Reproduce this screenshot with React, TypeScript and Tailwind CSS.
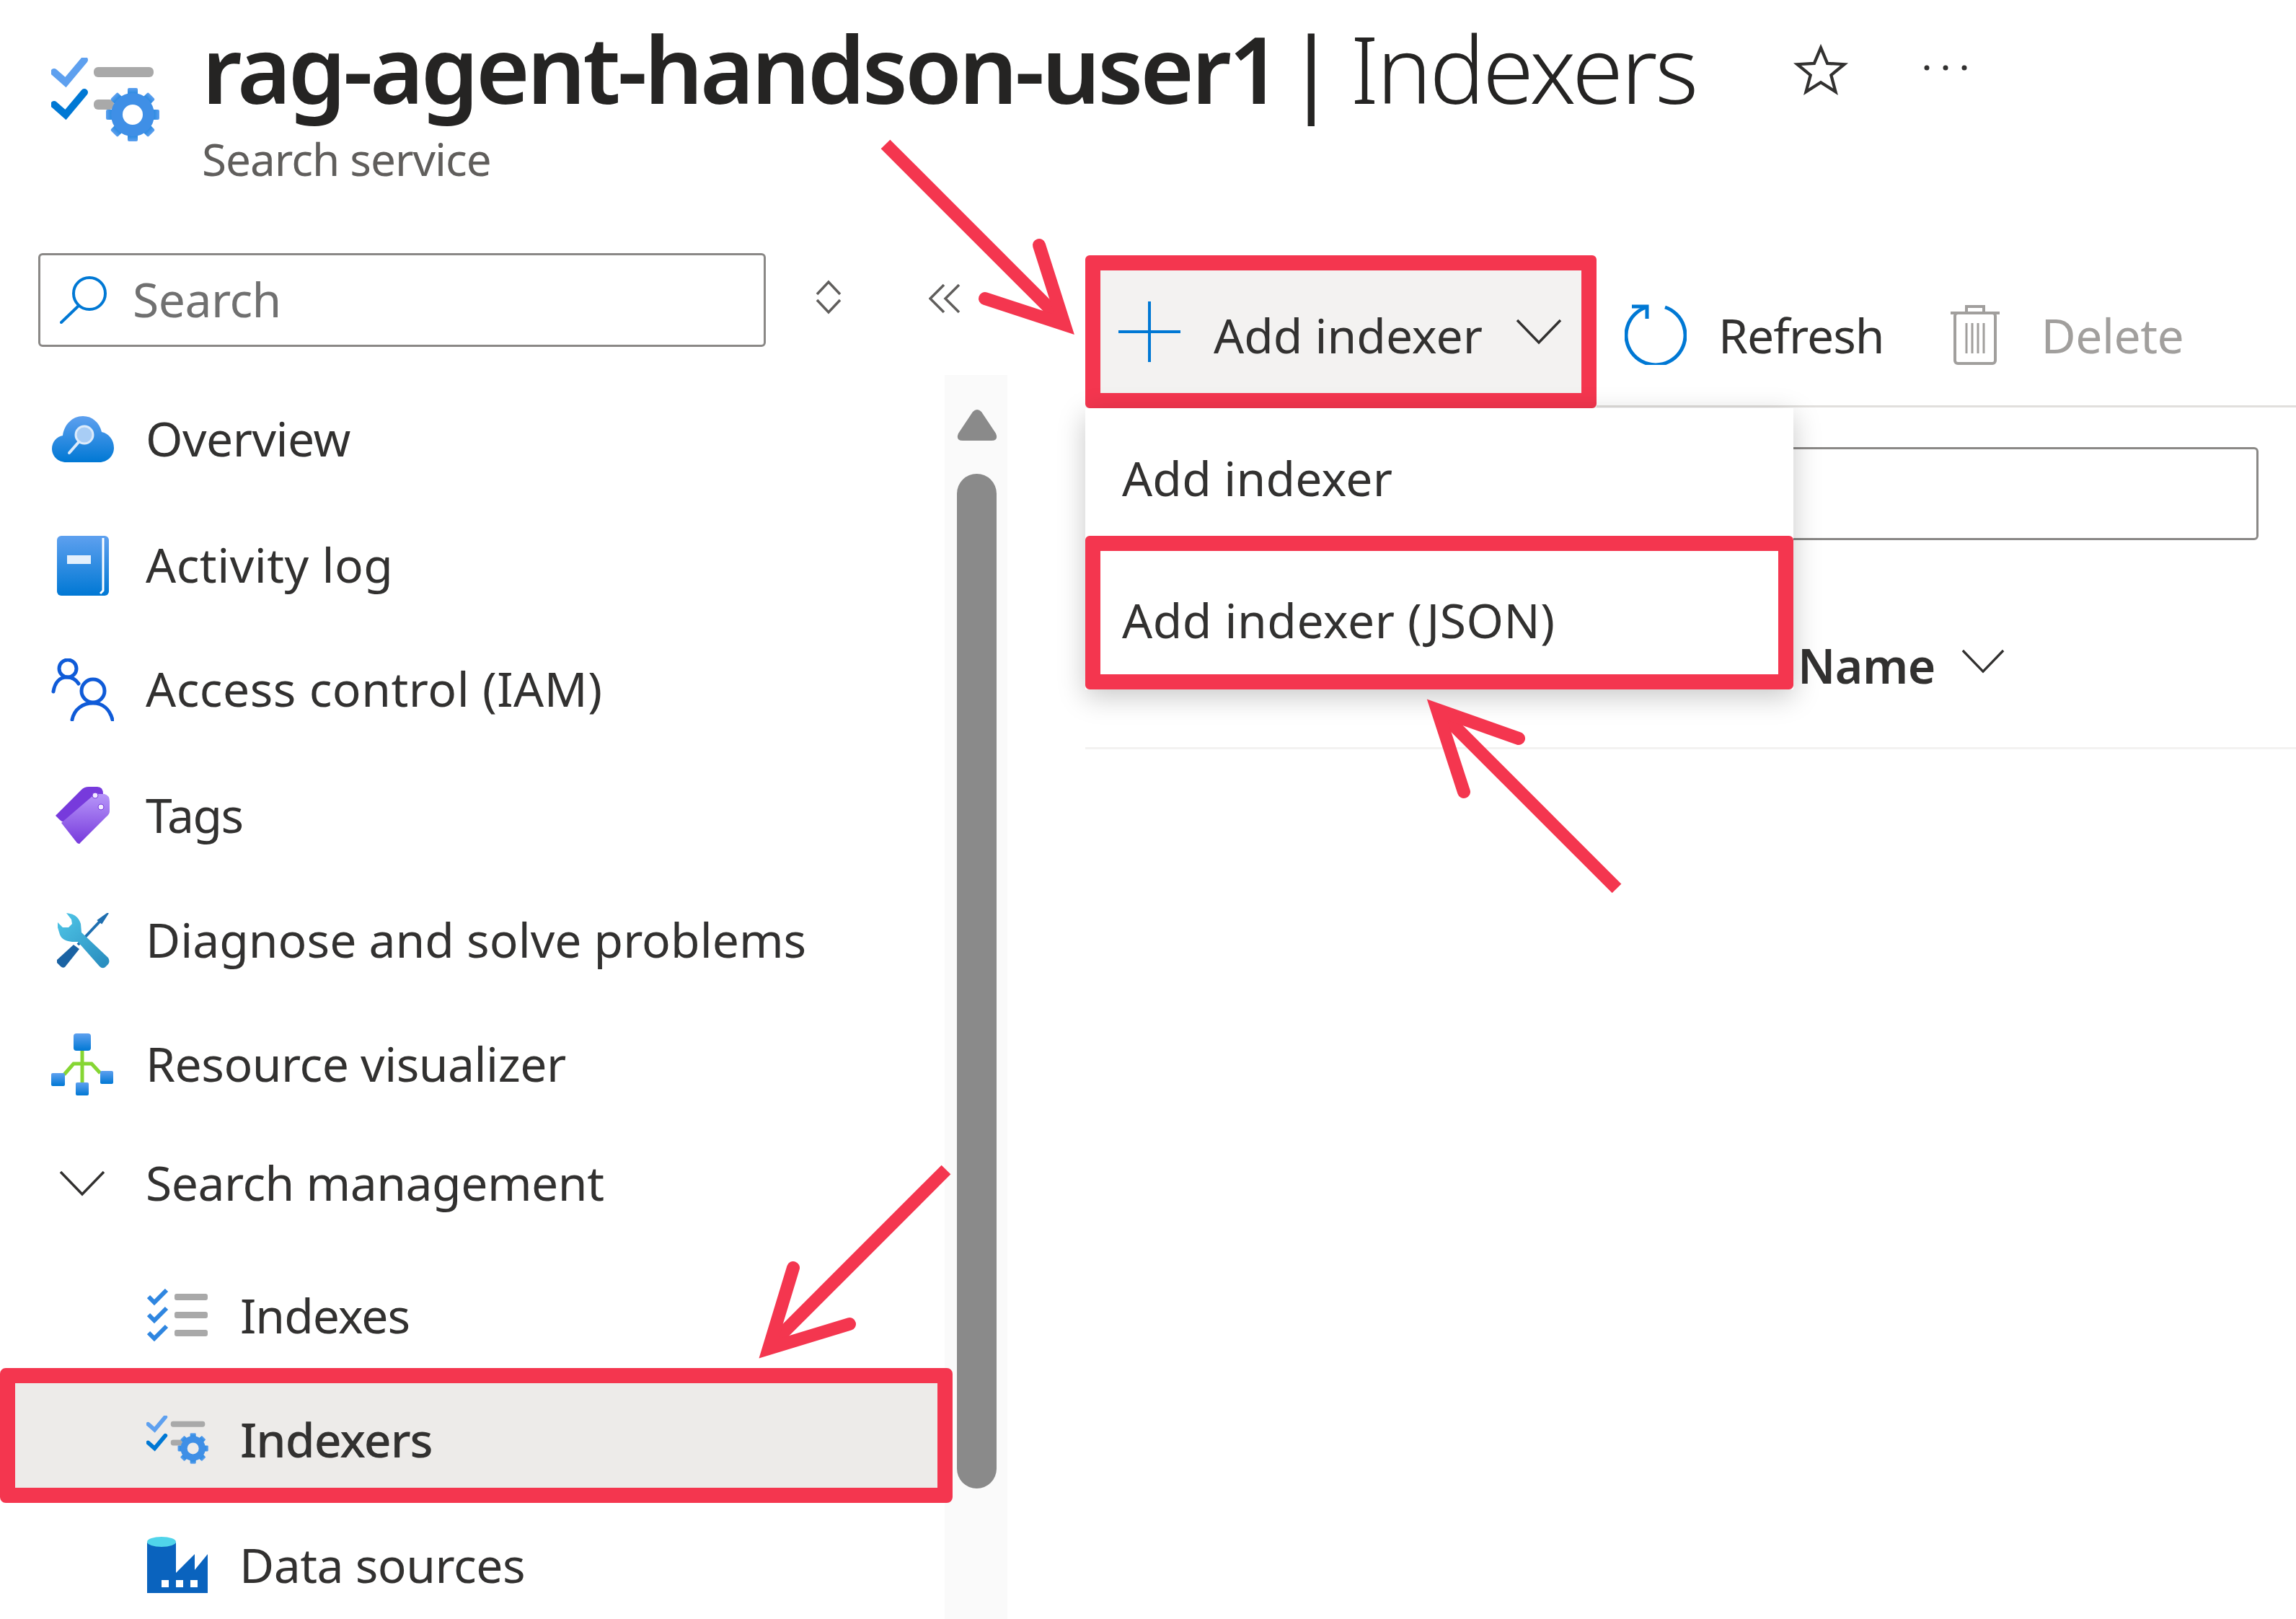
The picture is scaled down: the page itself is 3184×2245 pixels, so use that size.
const gearAngles = [0, 45, 90, 135, 180, 225, 270, 315]

function Defs() {
    return (
        <svg className="absolute w-0 h-0">
            <defs>
                <linearGradient id="blue" x1="0" y1="0" x2="0" y2="1">
                    <stop offset="0" stopColor="#5ea0ef" />
                    <stop offset="1" stopColor="#0078d4" />
                </linearGradient>
                <linearGradient id="purple" x1="0" y1="0" x2="0" y2="1">
                    <stop offset="0" stopColor="#b796f9" />
                    <stop offset="1" stopColor="#773adc" />
                </linearGradient>
                <linearGradient id="cyan" x1="0" y1="0" x2="0.8" y2="1">
                    <stop offset="0" stopColor="#50c7e8" />
                    <stop offset="1" stopColor="#2a8fc0" />
                </linearGradient>
            </defs>
        </svg>
    )
}

function IndexerIcon({ className }: { className: string }) {
    return (
        <svg viewBox="0 0 152 118" className={className}>
            <path d="M4 20 L20 34 L46 3" fill="none" stroke="#5ea0ef" strokeWidth="10" strokeLinecap="round" />
            <path d="M4 65 L20 79 L46 48" fill="none" stroke="#0078d4" strokeWidth="10" strokeLinecap="round" />
            <rect x="59" y="13" width="83" height="14" rx="6" fill="#a9a9a9" />
            <rect x="59" y="58" width="28" height="14" rx="6" fill="#a9a9a9" />
            <g>
                {gearAngles.map((a) => (
                    <rect key={a} x="106" y="42" width="14" height="14" rx="2" fill="url(#blue)" transform={`rotate(${a} 113 79)`} />
                ))}
                <circle cx="113" cy="79" r="22" fill="none" stroke="#3f8fe6" strokeWidth="16" />
            </g>
        </svg>
    )
}

function IndexesIcon() {
    return (
        <svg viewBox="0 0 84 73" className="w-[84px] h-[73px]">
            {[0, 25, 50].map((y) => (
                <g key={y}>
                    <path d={`M2 ${y + 11} L10 ${y + 19} L27 ${y + 2}`} fill="none" stroke="#2f86e0" strokeWidth="6" />
                    <rect x="38" y={y + 7} width="46" height="9" rx="3" fill="#a9a9a9" />
                </g>
            ))}
        </svg>
    )
}

function OverviewIcon() {
    return (
        <svg viewBox="0 0 86 64" className="w-[86px] h-[64px]">
            <path d="M20 64 C8 64 0 55 0 45 C0 36 7 28 15 27 C17 12 28 0 43 0 C56 0 66 9 69 22 C79 24 86 33 86 44 C86 55 77 64 66 64 Z" fill="url(#blue)" />
            <line x1="38" y1="35" x2="24" y2="51" stroke="#dcebfb" strokeWidth="4" strokeLinecap="round" />
            <circle cx="45" cy="26" r="12" fill="#a8cdf5" stroke="#dcebfb" strokeWidth="3" />
        </svg>
    )
}

function ActivityIcon() {
    return (
        <svg viewBox="0 0 72 83" className="w-[72px] h-[83px]">
            <rect x="0" y="0" width="72" height="83" rx="6" fill="url(#blue)" />
            <path d="M64 3 L64 76 L60 80" fill="none" stroke="white" strokeWidth="3" />
            <rect x="14" y="27" width="33" height="12" fill="#e4f0fc" />
        </svg>
    )
}

function AccessIcon() {
    return (
        <svg viewBox="0 0 87 87" className="w-[87px] h-[87px]" fill="none" stroke="#0f5bd8" strokeWidth="5" strokeLinecap="round">
            <circle cx="23" cy="14" r="12" />
            <path d="M3 46 C5 33 12 26 22 26 C29 26 34 29 38 35" />
            <circle cx="58" cy="45" r="16" />
            <path d="M29 85 C32 70 44 62 58 62 C71 62 81 70 85 85" />
        </svg>
    )
}

function TagsIcon() {
    return (
        <svg viewBox="0 0 75 80" className="w-[75px] h-[80px]">
            <path d="M0 40 L36 4 Q40 0 46 0 L58 0 Q66 0 66 10 L66 16 L14 48 Q10 50 6 46 Z" fill="#773adc" />
            <path d="M8 50 L50 14 Q54 10 60 10 L68 10 Q75 12 75 20 L75 34 Q75 38 70 42 L34 78 Q34 80 30 78 Z" fill="url(#purple)" />
            <circle cx="55" cy="12" r="4" fill="#f2ecff" stroke="#773adc" strokeWidth="1" />
            <circle cx="63" cy="28" r="4" fill="#f2ecff" stroke="#773adc" strokeWidth="1" />
        </svg>
    )
}

function DiagnoseIcon() {
    return (
        <svg viewBox="0 0 74 77" className="w-[74px] h-[77px]">
            <path d="M1 65 L24 44 L32 50 L12 75 Q9 77 6 74 L1 69 Z" fill="#1a62a3" />
            <path d="M30 44 L62 10" stroke="#1f6fb0" strokeWidth="4" fill="none" />
            <path d="M58 10 L72 0 L63 14 Z" fill="#1f6fb0" stroke="#1f6fb0" strokeWidth="2" />
            <path d="M14 0 C24 1 31 5 34 15 L35 27 L72 62 Q75 67 72 71 L68 75 Q64 78 60 74 L30 40 L22 40 C14 39 8 37 5 30 L2 20 L2 13 L9 20 L17 20 L22 15 L21 9 Z" fill="url(#cyan)" />
        </svg>
    )
}

function ResourceIcon() {
    return (
        <svg viewBox="0 0 87 86" className="w-[87px] h-[86px]">
            <path d="M43 24 L43 68 M18 57 L31 42 L56 42 L68 55" fill="none" stroke="#86d633" strokeWidth="5" />
            <rect x="31" y="0" width="24" height="24" rx="4" fill="url(#blue)" />
            <rect x="0" y="55" width="19" height="18" rx="2" fill="url(#blue)" />
            <rect x="68" y="52" width="18" height="18" rx="2" fill="url(#blue)" />
            <rect x="34" y="68" width="18" height="18" rx="2" fill="url(#blue)" />
        </svg>
    )
}

function DataSourcesIcon() {
    return (
        <svg viewBox="0 0 84 80" className="w-[84px] h-[80px]">
            <path d="M0 8 L0 78 L84 78 L84 24 L66 46 L66 24 L40 50 L40 8 Z" fill="#0a63be" />
            <ellipse cx="20" cy="7" rx="20" ry="7" fill="#50d4ea" />
            <rect x="20" y="60" width="10" height="10" fill="white" />
            <rect x="40" y="60" width="10" height="10" fill="white" />
            <rect x="60" y="60" width="10" height="10" fill="white" />
        </svg>
    )
}

function Chevron({ className }: { className: string }) {
    return (
        <svg viewBox="0 0 64 36" className={className} fill="none" stroke="#323130" strokeWidth="3.5">
            <path d="M2 2 L32 33 L62 2" />
        </svg>
    )
}

const rows = [
    { label: 'Overview', icon: <OverviewIcon />, cls: 'h-[178px]', text: 'tracking-[-0.5px]' },
    { label: 'Activity log', icon: <ActivityIcon />, cls: 'h-[172px]', text: 'tracking-[0.5px]' },
    { label: 'Access control (IAM)', icon: <AccessIcon />, cls: 'h-[172px]', text: 'tracking-[0.5px]' },
    { label: 'Tags', icon: <TagsIcon />, cls: 'h-[178px]', text: 'tracking-[-1.5px]' },
    { label: 'Diagnose and solve problems', icon: <DiagnoseIcon />, cls: 'h-[168px]', text: 'tracking-[0px]' },
    { label: 'Resource visualizer', icon: <ResourceIcon />, cls: 'h-[176px]', text: 'tracking-[-0.5px]' },
]

export default function App() {
    return (
        <div className="relative w-[3184px] h-[2245px] overflow-hidden bg-white font-['Noto_Sans',sans-serif] text-[#323130]">
            <Defs />

            <header className="flex items-start h-[351px] pl-[71px]">
                <IndexerIcon className="w-[152px] h-[118px] mt-[80px] shrink-0" />
                <div className="ml-[57px]">
                    <h1 className="flex items-baseline text-[128px] leading-[190px] tracking-[-3px] whitespace-nowrap text-[#252423] font-light">
                        <span className="font-semibold tracking-[-4px]">rag-agent-handson-user1</span>
                        <span className="ml-[10px] font-normal">|</span>
                        <span className="ml-[22px]">Indexers</span>
                    </h1>
                    <p className="text-[62px] leading-[70px] text-[#605e5c] tracking-[-1px] -mt-[5px]">Search service</p>
                </div>
                <svg viewBox="0 0 24 24" className="w-[78px] h-[78px] ml-[134px] mt-[58px] shrink-0" fill="none" stroke="#323130" strokeWidth="1.3">
                    <path d="M12 2.5 L14.8 9.2 L22 9.6 L16.4 14.2 L18.3 21.3 L12 17.3 L5.7 21.3 L7.6 14.2 L2 9.6 L9.2 9.2 Z" />
                </svg>
                <svg viewBox="0 0 60 8" className="w-[60px] h-[8px] ml-[104px] mt-[90px] shrink-0" fill="#323130">
                    <circle cx="4" cy="4" r="3.5" />
                    <circle cx="30" cy="4" r="3.5" />
                    <circle cx="56" cy="4" r="3.5" />
                </svg>
            </header>

            <div className="flex">
                <aside className="w-[1505px] shrink-0">
                    <div className="flex items-start h-[169px] pl-[53px]">
                        <div className="flex items-center w-[1009px] h-[130px] border-[3px] border-[#8a8886] rounded-[6px] pl-[27px]">
                            <svg viewBox="0 0 66 66" className="w-[66px] h-[66px]" fill="none" stroke="#0078d4" strokeWidth="4">
                                <circle cx="41" cy="24" r="22" />
                                <path d="M26 41 L2 64" strokeLinecap="round" />
                            </svg>
                            <span className="ml-[35px] pb-[4px] text-[66px] tracking-[-0.5px] text-[#707070]">Search</span>
                        </div>
                        <svg viewBox="0 0 36 48" className="w-[36px] h-[48px] ml-[69px] mt-[37px]" fill="none" stroke="#605e5c" strokeWidth="3.5">
                            <path d="M2 20 L18 3 L34 20 M2 28 L18 45 L34 28" />
                        </svg>
                        <svg viewBox="0 0 44 42" className="w-[44px] h-[42px] ml-[121px] mt-[42px]" fill="none" stroke="#605e5c" strokeWidth="3.5">
                            <path d="M21 2 L2 21 L21 40 M42 2 L23 21 L42 40" />
                        </svg>
                    </div>

                    <div className="flex">
                        <nav className="w-[1310px] shrink-0">
                            {rows.map((r) => (
                                <div key={r.label} className={`flex items-center ${r.cls} pl-[71px]`}>
                                    <div className="flex justify-center w-[87px] shrink-0">{r.icon}</div>
                                    <span className={`ml-[44px] pb-[4px] text-[66px] ${r.text}`}>{r.label}</span>
                                </div>
                            ))}
                            <div className="flex items-center h-[154px] pl-[82px]">
                                <Chevron className="w-[64px] h-[36px] shrink-0" />
                                <span className="ml-[56px] pb-[4px] text-[66px] tracking-[-0.5px]">Search management</span>
                            </div>
                            <div className="flex items-center h-[179px] pt-[32px] pl-[204px]">
                                <IndexesIcon />
                                <span className="ml-[45px] text-[66px] tracking-[-1px]">Indexes</span>
                            </div>
                            <div className="relative flex items-center w-[1321px] h-[187px] pt-[12px] pl-[182px] border-[21px] border-[#f4364f] rounded-[8px] bg-[#edebe9]">
                                <IndexerIcon className="w-[87px] h-[68px] shrink-0" />
                                <span className="ml-[43px] pb-[2px] text-[66px] tracking-[-1px] font-medium">Indexers</span>
                            </div>
                            <div className="flex items-center h-[174px] pl-[204px]">
                                <DataSourcesIcon />
                                <span className="ml-[44px] pb-[4px] text-[66px] tracking-[-0.5px]">Data sources</span>
                            </div>
                        </nav>
                        <div className="w-[87px] h-[1725px] bg-[#fafafa] pl-[17px] pt-[47px]">
                            <svg viewBox="0 0 56 44" className="w-[56px] h-[44px]" fill="#8a8a8a">
                                <path d="M22 4 Q28 -2 34 4 L54 34 Q58 44 48 44 L8 44 Q-2 44 2 34 Z" />
                            </svg>
                            <div className="w-[55px] h-[1407px] mt-[46px] rounded-full bg-[#8a8a8a]" />
                        </div>
                    </div>
                </aside>

                <main className="flex-1 pt-[3px]">
                    <div className="flex h-[212px]">
                        <div className="flex items-center w-[709px] h-full border-[21px] border-[#f4364f] rounded-[6px] bg-[#f3f2f1] pl-[25px] shrink-0">
                            <svg viewBox="0 0 86 84" className="w-[86px] h-[84px] shrink-0" fill="none" stroke="#0078d4" strokeWidth="4">
                                <path d="M43 0 L43 84 M0 42 L86 42" />
                            </svg>
                            <span className="ml-[46px] mt-[8px] text-[66px] tracking-[0px] whitespace-nowrap">Add indexer</span>
                            <Chevron className="w-[64px] h-[36px] ml-[46px] shrink-0" />
                        </div>
                        <div className="flex items-center flex-1 h-[211px] pt-[12px] border-b-[3px] border-[#e1dfdd] pl-[39px]">
                            <svg viewBox="0 0 86 84" className="w-[86px] h-[84px] shrink-0" fill="none" stroke="#0078d4" strokeWidth="5">
                                <path d="M56 4 A41 41 0 1 1 30 4" />
                                <path d="M10 3 L31 3 L31 20" />
                            </svg>
                            <span className="ml-[44px] text-[66px] tracking-[-1px]">Refresh</span>
                            <svg viewBox="0 0 72 84" className="w-[72px] h-[84px] ml-[90px] shrink-0" fill="none" stroke="#a19f9d" strokeWidth="4">
                                <path d="M2 12 L70 12 M24 12 L24 3 L48 3 L48 12" />
                                <rect x="8" y="12" width="56" height="70" rx="4" />
                                <path d="M24 26 L24 68 M32 26 L32 68 M40 26 L40 68 M48 26 L48 68" strokeWidth="3" />
                            </svg>
                            <span className="ml-[56px] text-[66px] tracking-[-0.5px] text-[#a19f9d]">Delete</span>
                        </div>
                    </div>

                    <div className="relative pt-[54px]">
                        <div className="h-[129px] mr-[52px] border-[3px] border-[#8a8886] rounded-[6px]" />
                        <div className="flex items-center gap-[36px] h-[229px] pb-[2px] mt-[61px] pl-[988px] border-b-[3px] border-[#f3f2f1]">
                            <span className="text-[66px] tracking-[-0.5px] font-semibold">Name</span>
                            <Chevron className="w-[60px] h-[34px] -mt-[10px]" />
                        </div>

                        <div className="absolute left-0 top-0 w-[982px] bg-white shadow-[0_10px_36px_rgba(0,0,0,0.22)]">
                            <div className="flex items-center h-[177px] pt-[16px] pl-[51px] text-[66px] tracking-[0.2px]">Add indexer</div>
                            <div className="flex items-center h-[213px] pt-[20px] pl-[30px] border-[21px] border-[#f4364f] rounded-[6px] text-[66px] tracking-[0.5px]">Add indexer (JSON)</div>
                        </div>
                    </div>
                </main>
            </div>

            <svg viewBox="0 0 3184 2245" className="absolute inset-0 w-[3184px] h-[2245px] pointer-events-none" fill="none" stroke="#f4364f" strokeWidth="18">
                <path d="M1228 200 L1472 444" />
                <path d="M1441 340 L1476 450 L1366 414" strokeLinecap="round" />
                <path d="M2242 1232 L2002 992" />
                <path d="M2030 1098 L1993 984 L2106 1024" strokeLinecap="round" />
                <path d="M1312 1622 L1072 1862" />
                <path d="M1100 1758 L1066 1870 L1178 1836" strokeLinecap="round" />
            </svg>
        </div>
    )
}
